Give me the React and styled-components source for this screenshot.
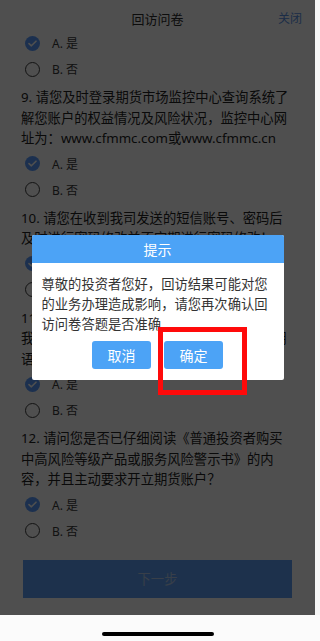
import React from 'react';
import styled, { createGlobalStyle } from 'styled-components';

const GlobalStyle = createGlobalStyle`
  html, body { margin: 0; padding: 0; background: #f6f6f6; }
  body { font-family: "Noto Sans", "Noto Sans CJK SC", sans-serif; }
  * { box-sizing: border-box; }
`;

const Screen = styled.div`
  width: 320px;
  height: 641px;
  display: flex;
  flex-direction: column;
  overflow: hidden;
`;

const Frame = styled.div`
  position: relative;
  flex: none;
  width: 315px;
  height: 615px;
  background: #ffffff;
  overflow: hidden;
`;

const Header = styled.header`
  height: 30px;
  padding: 8px 13px 0;
  display: grid;
  grid-template-columns: 1fr auto 1fr;
  align-items: start;
`;

const Title = styled.h1`
  grid-column: 2;
  margin: 0;
  font-size: 13px;
  font-weight: 400;
  line-height: 22px;
  color: #2a2a2a;
`;

const Close = styled.button`
  justify-self: end;
  border: 0;
  background: none;
  padding: 0;
  font: inherit;
  font-size: 12px;
  line-height: 22px;
  color: #5b93e6;
`;

const Content = styled.main`
  padding: 0 21px;
`;

const Question = styled.p`
  margin: 5px 0 2px;
  font-size: 13.3px;
  line-height: 20.5px;
  color: #222;
`;

const OptionRow = styled.label`
  height: 26px;
  display: flex;
  align-items: center;
  gap: 12px;
  padding-left: 4px;
  font-size: 12px;
  color: #3a3a3a;
`;

const RadioCircle = styled.span`
  width: 15px;
  height: 15px;
  border-radius: 50%;
  display: inline-flex;
  align-items: center;
  justify-content: center;
  flex: none;
  background: ${p => (p.$checked ? '#5a9cff' : 'transparent')};
  border: ${p => (p.$checked ? 'none' : '1.4px solid #3c3c3c')};
`;

const NextButton = styled.button`
  display: block;
  width: calc(100% - 4px);
  margin: 16px 2px 0;
  height: 38px;
  border: 0;
  background: #5e9ff6;
  color: #b4cbea;
  font: inherit;
  font-size: 13.3px;
`;

const Overlay = styled.div`
  position: absolute;
  inset: 0;
  background: rgba(0, 0, 0, 0.69);
  display: flex;
  align-items: center;
  justify-content: center;
`;

const Dialog = styled.div`
  width: 252px;
  background: #ffffff;
  border-radius: 2px;
  overflow: hidden;
`;

const DialogHeader = styled.div`
  height: 28px;
  background: #4ca3f6;
  color: #fff;
  font-size: 14px;
  display: flex;
  align-items: center;
  justify-content: center;
`;

const DialogBody = styled.p`
  margin: 0;
  padding: 11px 10px 0;
  font-size: 13.3px;
  line-height: 20px;
  color: #333;
`;

const DialogActions = styled.div`
  display: flex;
  justify-content: center;
  gap: 13px;
  padding: 7px 0 11px;
`;

const DialogButton = styled.button`
  width: 59px;
  height: 28px;
  border: 0;
  border-radius: 3px;
  background: #4ca3f6;
  color: #fff;
  font: inherit;
  font-size: 14px;
`;

const Highlight = styled.div`
  position: absolute;
  left: 158px;
  top: 327px;
  width: 89px;
  height: 68px;
  border: 5px solid #ff0a0a;
`;

const HomeArea = styled.div`
  flex: 1;
  background: #fbfbfb;
  display: flex;
  justify-content: center;
  padding: 17px 4px 0 0;
`;

const Indicator = styled.div`
  width: 112px;
  height: 4px;
  border-radius: 2px;
  background: #000;
`;

const questions = [
  { text: null, answer: 'A' },
  {
    text: '9. 请您及时登录期货市场监控中心查询系统了解您账户的权益情况及风险状况，监控中心网址为：www.cfmmc.com或www.cfmmc.cn',
    answer: 'A',
  },
  {
    text: '10. 请您在收到我司发送的短信账号、密码后及时进行密码修改并不定期进行密码修改！',
    answer: 'A',
  },
  {
    text: '11. 请您确认是否已经认真阅读并充分理解了我司在开户过程中向您揭示的各项风险提示用语？',
    answer: 'A',
  },
  {
    text: '12. 请问您是否已仔细阅读《普通投资者购买中高风险等级产品或服务风险警示书》的内容，并且主动要求开立期货账户？',
    answer: 'A',
  },
];

const Radio = ({ checked }) => (
  <RadioCircle $checked={checked}>
    {checked && (
      <svg width="9" height="7" viewBox="0 0 9 7">
        <polyline points="1,3.6 3.4,5.8 8,1.2" fill="none" stroke="#fff" strokeWidth="1.6" strokeLinecap="round" strokeLinejoin="round" />
      </svg>
    )}
  </RadioCircle>
);

export default function App() {
  return (
    <Screen>
      <GlobalStyle />
      <Frame>
        <Header>
          <Title>回访问卷</Title>
          <Close>关闭</Close>
        </Header>
        <Content>
          {questions.map((q, i) => (
            <section key={i}>
              {q.text && <Question>{q.text}</Question>}
              <OptionRow>
                <Radio checked={q.answer === 'A'} />
                A. 是
              </OptionRow>
              <OptionRow>
                <Radio checked={q.answer === 'B'} />
                B. 否
              </OptionRow>
            </section>
          ))}
          <NextButton>下一步</NextButton>
        </Content>
        <Overlay>
          <Dialog>
            <DialogHeader>提示</DialogHeader>
            <DialogBody>
              尊敬的投资者您好，回访结果可能对您的业务办理造成影响，请您再次确认回访问卷答题是否准确
            </DialogBody>
            <DialogActions>
              <DialogButton>取消</DialogButton>
              <DialogButton>确定</DialogButton>
            </DialogActions>
          </Dialog>
        </Overlay>
        <Highlight />
      </Frame>
      <HomeArea>
        <Indicator />
      </HomeArea>
    </Screen>
  );
}
